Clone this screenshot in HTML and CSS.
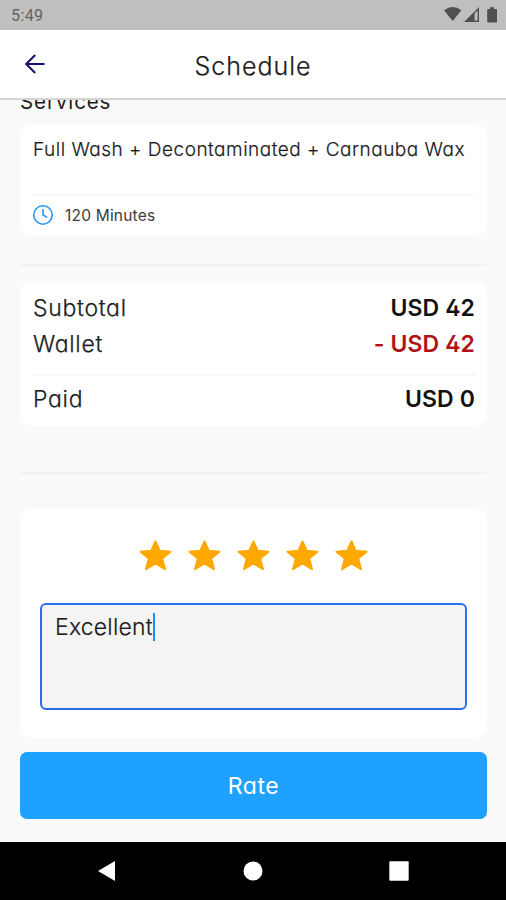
FILE: index.html
```html
<!DOCTYPE html>
<html lang="en">
<head>
<meta charset="utf-8">
<title>Schedule</title>
<link rel="stylesheet" href="styles.css">
</head>
<body>
<div class="screen">
  <div class="statusbar">
    <span class="time">5:49</span>
    <svg class="status-icons" width="54" height="18" viewBox="0 0 54 18">
      <path d="M0 3.2Q8.7-3 17.4 3.2L8.7 14Z"/>
      <path fill-rule="evenodd" d="M20 15 35 0V15ZM30.6 6.4V13.6H33.6V3.4Z"/>
      <path d="M46 .2h4v1.8h2.3q.7 0 .7.7v12.1q0 .7-.7.7h-8.4q-.7 0-.7-.7V2.700q0-.7.7-.7H46Z"/>
    </svg>
  </div>
  <header class="header">
    <svg class="back" width="20" height="20" viewBox="0 0 20 20"><path d="M10.200 1 1.200 10 10.200 19M1.200 10H19.500"/></svg>
    <h1 class="title">Schedule</h1>
  </header>
  <main class="content">
    <h2 class="section"><span>Services</span></h2>
    <section class="card service">
      <p class="service-name">Full Wash + Decontaminated + Carnauba Wax</p>
      <div class="duration">
        <svg width="20" height="20" viewBox="0 0 20 20"><circle cx="10" cy="10" r="9.200"/><path d="M10 4V10L14.200 12.400"/></svg>
        <span>120 Minutes</span>
      </div>
    </section>
    <hr class="rule rule-first">
    <section class="card totals">
      <div class="row"><span class="label subtotal">Subtotal</span><b>USD 42</b></div>
      <div class="row"><span class="label">Wallet</span><b class="debit">- USD 42</b></div>
      <div class="row paid"><span class="label">Paid</span><b>USD 0</b></div>
    </section>
    <hr class="rule rule-second">
    <section class="card review">
      <div class="stars">
        <svg viewBox="0 0 33 31"><path d="M16.500 1.500 20.800 10.800 31.500 11.700 23.200 18.400 26 29.200 16.500 23.500 7 29.200 9.800 18.400 1.500 11.700 12.200 10.800Z"/></svg>
        <svg viewBox="0 0 33 31"><path d="M16.500 1.500 20.800 10.800 31.500 11.700 23.200 18.400 26 29.200 16.500 23.500 7 29.200 9.800 18.400 1.500 11.700 12.200 10.800Z"/></svg>
        <svg viewBox="0 0 33 31"><path d="M16.500 1.500 20.800 10.800 31.500 11.700 23.200 18.400 26 29.200 16.500 23.500 7 29.200 9.800 18.400 1.500 11.700 12.200 10.800Z"/></svg>
        <svg viewBox="0 0 33 31"><path d="M16.500 1.500 20.800 10.800 31.500 11.700 23.200 18.400 26 29.200 16.500 23.500 7 29.200 9.800 18.400 1.500 11.700 12.200 10.800Z"/></svg>
        <svg viewBox="0 0 33 31"><path d="M16.500 1.500 20.800 10.800 31.500 11.700 23.200 18.400 26 29.200 16.500 23.500 7 29.200 9.800 18.400 1.500 11.700 12.200 10.800Z"/></svg>
      </div>
      <div class="comment"><span>Excellent</span><i class="caret"></i></div>
    </section>
    <button class="rate">Rate</button>
  </main>
  <nav class="navbar">
    <svg viewBox="0 0 20 22"><path d="M1 11 18 1V21Z"/></svg>
    <svg viewBox="0 0 20 22"><circle cx="10" cy="11" r="9.500"/></svg>
    <svg viewBox="0 0 20 22"><rect x=".3" y="1.300" width="19.400" height="19.400" rx="1"/></svg>
  </nav>
</div>
</body>
</html>
```

FILE: styles.css
```css
* { box-sizing: border-box; }
body { margin: 0; background: #fafafa; }
.screen {
  width: 506px;
  height: 900px;
  display: flex;
  flex-direction: column;
  overflow: hidden;
  font-family: Inter, "Liberation Sans", sans-serif;
  font-feature-settings: "cv11", "cv02";
  color: #1c1c1c;
  white-space: nowrap;
}
.statusbar {
  height: 30px;
  flex: none;
  display: flex;
  justify-content: space-between;
  align-items: flex-start;
  padding: 7px 8px 0 11px;
  background: #bfbfbf;
}
.time { font: 16px/18px Roboto, sans-serif; letter-spacing: .4px; color: #636363; }
.status-icons { fill: #505050; }
.header {
  height: 70px;
  flex: none;
  display: grid;
  grid-template-columns: 60px 1fr 60px;
  align-items: center;
  background: #fff;
  border-bottom: 2px solid #d5d5d5;
}
.back { margin-left: 25px; fill: none; stroke: #10106e; stroke-width: 2; }
.title { margin: 3px 0 0; text-align: center; font-size: 25px; line-height: 32px; font-weight: 300; letter-spacing: 1px; -webkit-text-stroke: .25px #1c1c1c; }
.content { flex: 1; min-height: 0; padding: 0 19px 0 20px; overflow: hidden; }
.section { margin: 0; height: 24px; display: flex; align-items: flex-start; overflow: hidden; font-size: 20.500px; font-weight: 400; line-height: 24px; letter-spacing: .9px; }
.section span { margin-top: -10px; }
.card { background: #fff; border-radius: 13px; padding: 0 12px; }
.service { height: 112px; }
.service-name { margin: 0; height: 72px; padding: 14px 0 0 1px; border-bottom: 2px solid #f7f7f7; font-size: 19px; line-height: 24px; font-weight: 300; letter-spacing: .5px; -webkit-text-stroke: .2px #1c1c1c; }
.duration { height: 38px; display: flex; align-items: center; gap: 12px; padding-left: 1px; font-size: 15.500px; letter-spacing: .2px; color: #3c3c3c; }
.duration svg { fill: none; stroke: #2497fa; stroke-width: 1.600; }
.rule { border: 0; height: 2px; background: #f3f3f3; margin: 0; }
.rule-first { margin: 28px 0 15px; }
.totals { height: 145px; padding-top: 9px; }
.row { height: 36px; display: flex; align-items: center; justify-content: space-between; font-size: 23px; }
.row b { font-weight: 600; color: #111; letter-spacing: .1px; }
.row .debit { color: #b01217; }
.label { padding-left: 1px; font-weight: 300; letter-spacing: .7px; -webkit-text-stroke: .25px #1c1c1c; }
.paid { height: 47px; margin-top: 12px; border-top: 2px solid #f7f7f7; }
.rule-second { margin: 46px 0 34px; }
.review { height: 230px; padding: 32px 20px 0; }
.stars { display: flex; justify-content: center; gap: 16px; height: 31px; }
.stars svg { width: 33px; height: 31px; fill: #ffa800; stroke: #ffa800; stroke-width: 2; stroke-linejoin: round; }
.comment { height: 107px; margin-top: 32px; padding: 7px 13px; display: flex; align-items: flex-start; background: #f4f4f4; border: 2px solid #2a6fe8; border-radius: 6px; font-size: 23px; line-height: 30px; font-weight: 300; letter-spacing: .2px; -webkit-text-stroke: .2px #1c1c1c; }
.caret { width: 2px; height: 28px; margin-top: 1px; background: #208ff5; }
.rate { display: block; width: 467px; height: 67px; margin-top: 14px; padding: 0; border: 0; border-radius: 7px; background: #1ea1ff; color: #fff; font: inherit; font-feature-settings: inherit; font-size: 23px; letter-spacing: .5px; }
.navbar { height: 58px; flex: none; display: flex; justify-content: center; gap: 126px; padding-top: 18px; background: #000; }
.navbar svg { width: 20px; height: 22px; fill: #fff; }
```
